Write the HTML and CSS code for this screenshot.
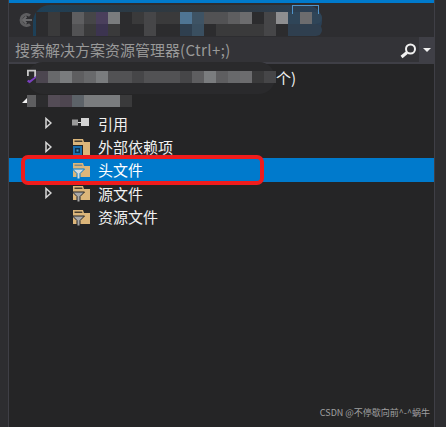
FILE: index.html
```html
<!DOCTYPE html>
<html lang="zh">
<head>
<meta charset="utf-8">
<title>解决方案资源管理器</title>
<link rel="stylesheet" href="styles.css">
</head>
<body>
<div class="gutter"></div>
<main class="panel">
  <div class="accent"></div>
  <div class="toolbar">
    <span class="smear"></span>
    <svg class="back" viewBox="0 0 14 14" width="14" height="14"><path d="M11 2.700A5.500 5.500 0 1 0 11 11.300" fill="none" stroke="#5e5e60" stroke-width="3"/><path d="M7.500 3.500 4 7l3.500 3.500M4.500 7H13" fill="none" stroke="#6a6a6c" stroke-width="2"/></svg>
    <div class="mosaic">
      <div class="mrow"><i class="c2"></i><i class="c3"></i><i class="c2"></i><i class="c6"></i><i class="c4"></i><i class="p1"></i><i class="c8"></i><i class="c2"></i><i class="c3"></i><i class="c4"></i><i class="c3"></i><i class="c3"></i><i class="b1"></i><i class="b2"></i><i class="c5"></i><i class="c5"></i><i class="c6"></i><i class="c7"></i><i class="c2"></i><i class="c4"></i><i class="c9"></i><i class="b3"></i><i class="c7"></i><i class="b3 end"></i></div>
      <div class="mrow"><i class="c2"></i><i class="c3"></i><i class="c2"></i><i class="c5"></i><i class="c3"></i><i class="p2"></i><i class="c3"></i><i class="c2"></i><i class="c2"></i><i class="c4"></i><i class="c2"></i><i class="c2"></i><i class="b4"></i><i class="b5"></i><i class="c2"></i><i class="c3"></i><i class="c3"></i><i class="c3"></i><i class="c3"></i><i class="c4"></i><i class="c2"></i><i class="b4"></i><i class="b4"></i><i class="b4 end"></i></div>
    </div>
    <span class="tab-outline"></span>
  </div>
  <div class="search">
    <span class="search-text">搜索解决方案资源管理器<span class="latin">(Ctrl+;)</span></span>
    <svg class="lens" viewBox="0 0 18 18" width="18" height="18"><circle cx="11.500" cy="8" r="4.500" fill="none" stroke="#f1f1f1" stroke-width="2"/><path d="M8 11.500 2.500 16" stroke="#f1f1f1" stroke-width="3"/></svg>
    <span class="drop"><span class="caret"></span></span>
  </div>
  <ul class="tree">
    <li class="row solution">
      <svg class="vs" viewBox="0 0 10 16" width="9" height="16"><path d="M0 0h10v8H8V2H2v5H0z" fill="#c8c8c8"/><path d="M0 13l3 2 7-6V7l-7 5-1.500-1z" fill="#7a3fc0"/></svg>
      <div class="mosaic wide">
        <i class="d1"></i><i class="s1"></i><i class="c8"></i><i class="c6"></i><i class="s1"></i><i class="c8"></i><i class="c5"></i><i class="c5"></i><i class="c4"></i><i class="c5"></i><i class="c5"></i><i class="c5"></i><i class="c4"></i><i class="c6"></i><i class="c8"></i><i class="c6"></i><i class="s1"></i><i class="c7"></i><i class="c3"></i><i class="c4"></i>
      </div>
      <span class="count">个)</span>
    </li>
    <li class="row project">
      <span class="open"></span>
      <div class="mosaic wide short">
        <i class="c6 thin"></i><i class="c2"></i><i class="d2"></i><i class="d3"></i><i class="s2"></i><i class="c8"></i><i class="c8"></i><i class="c8"></i><i class="c3"></i>
      </div>
    </li>
    <li class="row item">
      <svg class="arrow" viewBox="0 0 7 12" width="7" height="12"><path d="M1 1.500 6 6l-5 4.500z" fill="none" stroke="#d8d8d8" stroke-width="1.500"/></svg>
      <svg class="ico" viewBox="0 0 18 18" width="18" height="18"><rect x="0" y="5.500" width="6" height="6" fill="#9a9a9a"/><rect x="6" y="8" width="3" height="1" fill="#ddd"/><rect x="9" y="4" width="8" height="8" fill="#d4d4d4"/></svg>
      <span>引用</span></li>
    <li class="row item">
      <svg class="arrow" viewBox="0 0 7 12" width="7" height="12"><path d="M1 1.500 6 6l-5 4.500z" fill="none" stroke="#d8d8d8" stroke-width="1.500"/></svg>
      <svg class="ico" viewBox="0 0 18 18" width="18" height="18"><path d="M1 1h10l1 3h6v13H1z" fill="#dcb67a"/><path d="M2.500 2.500h7.500l.5 1.500h-8z" fill="#4a4030"/><rect x="0" y="7" width="11" height="11" fill="#252526"/><rect x="1" y="8" width="9" height="9" fill="#1b6fae"/><rect x="3" y="10" width="5" height="5" fill="#0d3350"/><rect x="4.500" y="11.500" width="2" height="2" fill="#3c9ad6"/></svg>
      <span>外部依赖项</span></li>
    <li class="row item selected">
      <span class="arrow none"></span>
      <svg class="ico" viewBox="0 0 18 18" width="18" height="18"><path d="M1 2h10l1 3h6v11H1z" fill="#dcb67a"/><path d="M2.500 3.500h7.500l.5 1.500h-8z" fill="#7d8a8a"/><path d="M.5 8h12L8 12.500V18H5v-5.500z" fill="#d8dde0" stroke="#007acc" stroke-width="1"/></svg>
      <span>头文件</span></li>
    <li class="row item">
      <svg class="arrow" viewBox="0 0 7 12" width="7" height="12"><path d="M1 1.500 6 6l-5 4.500z" fill="none" stroke="#d8d8d8" stroke-width="1.500"/></svg>
      <svg class="ico" viewBox="0 0 18 18" width="18" height="18"><path d="M1 2h10l1 3h6v11H1z" fill="#dcb67a"/><path d="M2.500 3.500h7.500l.5 1.500h-8z" fill="#4a4030"/><path d="M.5 8h12L8 12.500V18H5v-5.500z" fill="#a8a8a8" stroke="#252526" stroke-width="1"/></svg>
      <span>源文件</span></li>
    <li class="row item">
      <span class="arrow none"></span>
      <svg class="ico" viewBox="0 0 18 18" width="18" height="18"><path d="M1 2h10l1 3h6v11H1z" fill="#dcb67a"/><path d="M2.500 3.500h7.500l.5 1.500h-8z" fill="#4a4030"/><path d="M.5 8h12L8 12.500V18H5v-5.500z" fill="#a8a8a8" stroke="#252526" stroke-width="1"/></svg>
      <span>资源文件</span></li>
  </ul>
  <div class="highlight"></div>
  <div class="mark">CSDN @不停歇向前^-^蜗牛</div>
</main>
<div class="gutter right"></div>
</body>
</html>
```
FILE: styles.css
```css
* { box-sizing: border-box; }
html, body { height: 100%; }
body {
  margin: 0;
  display: flex;
  height: 427px;
  overflow: hidden;
  background: #2d2d30;
  font-family: "Noto Sans CJK SC", "Liberation Sans", sans-serif;
}
.gutter { width: 9px; flex: none; background: #2d2d30; border-right: 1px solid #3f3f46; }
.gutter.right { width: 12px; border-right: 0; border-left: 1px solid #3f3f46; }
.panel { position: relative; flex: 1; display: flex; flex-direction: column; background: #252526; min-width: 0; }
.accent { height: 3px; background: #007acc; flex: none; }
.toolbar { height: 34px; flex: none; display: flex; align-items: flex-start; padding: 9px 0 0 10px; background: #2d2d30; position: relative; }
.smear { position: absolute; left: 24px; top: 2px; width: 289px; height: 31px; border-radius: 20px 18px 18px 0; background: linear-gradient(90deg, #1d4058 0, #2a3a46 30%, #33383c 60%, #2a4056 100%); }
.back { position: relative; margin-top: 1px; flex: none; }
.mosaic { position: relative; display: flex; flex-direction: column; margin-left: 3px; }
.mrow { display: flex; }
.mrow i, .wide i { display: block; width: 12px; height: 12px; flex: none; }
.mrow .end { width: 10px; border-radius: 0 8px 8px 0; }
.wide i.thin { width: 9px; }
.tab-outline { position: absolute; left: 283px; top: 2px; width: 27px; height: 9px; border: 1px solid #4f93c9; border-bottom: 0; }
.c2 { background: #2c2c2e; } .c3 { background: #3a3a3b; } .c4 { background: #464648; }
.c5 { background: #525254; } .c6 { background: #5e5e60; } .c7 { background: #6c6c6e; }
.c8 { background: #7a7c7e; } .c9 { background: #8e8e90; }
.s1 { background: #68696b; } .s2 { background: #5c6268; }
.p1 { background: #4a3f5c; } .p2 { background: #3c3450; }
.b1 { background: #4f7594; } .b2 { background: #3e5364; } .b3 { background: #2f4558; }
.b4 { background: #2f3f4f; } .b5 { background: #3a4f60; }
.d1 { background: #4c4650; } .d2 { background: #544c56; } .d3 { background: #4e4650; }
.search { height: 27px; flex: none; display: flex; align-items: center; background: #333337; border-bottom: 2px solid #3f3f46; padding-left: 6px; }
.search-text { flex: 1; color: #999; font-size: 15px; white-space: nowrap; }
.latin { letter-spacing: .4px; }
.lens { flex: none; margin-right: 2px; }
.drop { width: 15px; align-self: stretch; background: #3f3f46; display: flex; align-items: center; justify-content: center; }
.caret { border: 4px solid transparent; border-top: 4px solid #f1f1f1; border-bottom: 0; }
.tree { list-style: none; margin: 0; padding: 1px 0 0; background: #252526; flex: 1; }
.row { height: 23.330px; display: flex; align-items: center; color: #f1f1f1; font-size: 15px; white-space: nowrap; }
.solution { position: relative; padding-left: 18px; }
.solution::before { content: ""; position: absolute; left: 18px; top: -3px; width: 248px; height: 32px; border-radius: 16px; background: #2a2a2c; }
.solution .vs { position: relative; flex: none; }
.wide { flex-direction: row; margin-left: 0; height: 12px; }
.short { margin-top: 2px; }
.count { position: relative; margin-top: 1px; }
.project { padding-left: 13px; }
.open { width: 0; height: 0; border-style: solid; border-width: 0 0 5px 5px; border-color: transparent transparent #f1f1f1 transparent; margin: 2px 0 0; }
.item { padding-left: 36px; }
.arrow { flex: none; margin-right: 20px; }
.arrow.none { width: 7px; height: 12px; }
.ico { flex: none; margin-right: 8px; }
.selected { background: #007acc; color: #fff; }
.highlight { position: absolute; left: 12px; top: 155px; width: 243px; height: 30px; border: 4px solid #f01c1c; border-radius: 7px; }
.mark { position: absolute; right: 4px; bottom: 8px; color: #a0a0a0; font-size: 9px; white-space: nowrap; }
```
